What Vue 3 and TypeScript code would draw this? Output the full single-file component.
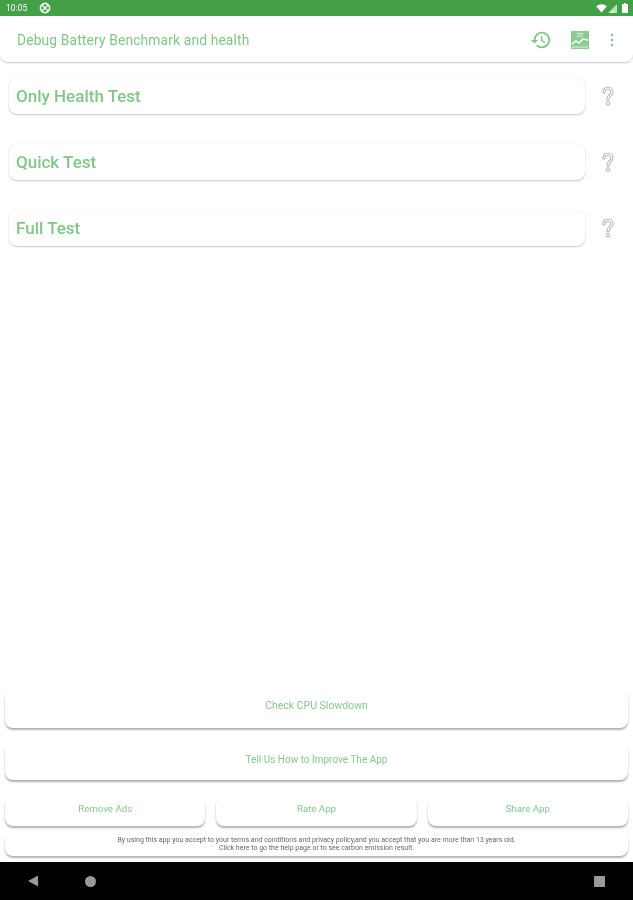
<script setup lang="ts">
const tests: string[] = ['Only Health Test', 'Quick Test', 'Full Test']
const smallButtons: string[] = ['Remove Ads', 'Rate App', 'Share App']
</script>

<template>
  <div class="screen">
    <header class="status">
      <div class="status-left">
        <span class="time">10:05</span>
        <svg class="status-badge" viewBox="0 0 12 12" width="12" height="12">
          <circle cx="6" cy="6" r="4.6" fill="none" stroke="#fff" stroke-width="1.6" />
          <path d="M3 3l6 6M9 3L3 9" stroke="#fff" stroke-width="1.2" />
        </svg>
      </div>
      <div class="status-right">
        <svg viewBox="0 0 12 10" width="11" height="9"><path d="M0 2.5Q6-2 12 2.5L6 9.5Z" fill="#fff" /></svg>
        <svg viewBox="0 0 10 10" width="9" height="9"><path d="M0 10L10 0V10Z" fill="#fff" opacity=".65" /><path d="M3 10L6 7V10Z" fill="#fff" /></svg>
        <svg class="battery" viewBox="0 0 6 10" width="6" height="10"><path d="M2 0H4V1H6V10H0V1H2Z" fill="#fff" /></svg>
      </div>
    </header>

    <section class="toolbar">
      <h1 class="title">Debug Battery Benchmark and health</h1>
      <div class="actions">
        <svg viewBox="0 0 24 24" width="22" height="22" class="history">
          <path d="M13 3a9 9 0 0 0-9 9H1l3.9 3.9L9 12H6a7 7 0 1 1 2.05 4.95l-1.42 1.42A9 9 0 1 0 13 3zm-1 5v5l4.28 2.54.72-1.21-3.5-2.08V8z" fill="#7fc685" />
        </svg>
        <svg viewBox="0 0 18 18" width="18" height="18" class="chart">
          <rect width="18" height="18" fill="#8ccb91" />
          <path d="M1 13l4-3 3 2 4-4 5 1" fill="none" stroke="#fff" stroke-width="1.5" />
          <path d="M6 2.500h6M6 5h6M1 16h16" stroke="#fff" stroke-width="1" opacity=".75" />
        </svg>
        <svg viewBox="0 0 4 14" width="4" height="14" class="more">
          <circle cx="2" cy="2" r="1.2" fill="#7fc685" />
          <circle cx="2" cy="7" r="1.2" fill="#7fc685" />
          <circle cx="2" cy="12" r="1.2" fill="#7fc685" />
        </svg>
      </div>
    </section>

    <main class="tests">
      <div v-for="test in tests" :key="test" class="test-row">
        <div class="test-card">{{ test }}</div>
        <svg class="help" viewBox="0 0 14 20" width="14" height="20">
          <path d="M3 6c0-5 8-5 8 0 0 3-4 3.500-4 7" fill="none" stroke="#aaa" stroke-width="3.200" stroke-linecap="round" />
          <path d="M3 6c0-5 8-5 8 0 0 3-4 3.500-4 7" fill="none" stroke="#fff" stroke-width="1.300" stroke-linecap="round" />
          <circle cx="7" cy="17.500" r="1.800" fill="#fff" stroke="#aaa" stroke-width="1" />
        </svg>
      </div>
    </main>

    <section class="bottom">
      <div class="btn wide first">Check CPU Slowdown</div>
      <div class="btn wide second">Tell Us How to Improve The App</div>
      <div class="small-row">
        <div v-for="label in smallButtons" :key="label" class="btn small">{{ label }}</div>
      </div>
      <div class="btn legal">
        <span>By using this app you accept to your terms and conditions and privacy policy,and you accept that you are more than 13 years old.</span>
        <span>Click here to go the help page or to see carbon emission result.</span>
      </div>
    </section>

    <nav class="navbar">
      <svg viewBox="0 0 12 12" width="11" height="12" class="nav-back"><path d="M11 0V12L0 6Z" fill="#9a9a9a" /></svg>
      <span class="nav-home"></span>
      <span class="nav-recent"></span>
    </nav>
  </div>
</template>

<style scoped>
.screen {
  width: 633px;
  height: 900px;
  display: flex;
  flex-direction: column;
  background: #fff;
  font-family: Roboto, "Liberation Sans", sans-serif;
  overflow: hidden;
  filter: blur(0.4px);
}
.status {
  height: 16px;
  flex: none;
  background: #43a047;
  display: flex;
  align-items: center;
  justify-content: space-between;
  padding: 0 5px 0 6px;
  color: #fff;
}
.status-left, .status-right { display: flex; align-items: center; }
.status-right { gap: 1px; }
.battery { margin-left: 4px; }
.time { font-size: 8.5px; width: 32px; }
.status-badge { margin-left: 1px; }
.toolbar {
  height: 45px;
  flex: none;
  margin-top: 1px;
  display: flex;
  align-items: center;
  justify-content: space-between;
  padding: 0 22px 0 17px;
  border-radius: 0 0 8px 8px;
  box-shadow: 0 1px 2px rgba(0, 0, 0, .22);
}
.title {
  margin: 0;
  font-size: 13.8px;
  font-weight: 400;
  color: #7fc685;
  letter-spacing: .15px;
}
.actions { display: flex; align-items: center; }
.chart { margin-left: 19px; }
.more { margin-left: 21px; margin-right: -3px; }
.tests {
  flex: 1;
  padding: 16px 8px 0 9px;
  display: flex;
  flex-direction: column;
  gap: 30px;
}
.test-row { display: flex; align-items: center; }
.test-card {
  width: 576px;
  height: 36px;
  box-sizing: border-box;
  padding-left: 7px;
  display: flex;
  align-items: center;
  border-radius: 8px;
  font-size: 17px;
  font-weight: 500;
  color: #82c788;
  box-shadow: 0 1px 2px rgba(0, 0, 0, .2), 0 0 1px rgba(0, 0, 0, .12);
}
.help { margin-left: 16px; }
.bottom {
  flex: none;
  padding: 0 5px 6px;
  display: flex;
  flex-direction: column;
}
.btn {
  display: flex;
  align-items: center;
  justify-content: center;
  border-radius: 8px;
  font-size: 9.7px;
  color: #86ca8c;
  box-shadow: 0 2px 2px rgba(0, 0, 0, .3), 0 0 1px rgba(0, 0, 0, .06);
}
.wide { box-sizing: border-box; }
.wide.first {
  height: 38px;
  padding-bottom: 7px;
  font-size: 10.5px;
}
.wide.second {
  height: 37px;
  margin-top: 15px;
  padding-bottom: 4px;
  font-size: 10px;
}
.small-row {
  margin-top: 17px;
  display: flex;
  gap: 11px;
}
.small {
  flex: 1;
  height: 29px;
  box-sizing: border-box;
  padding-bottom: 6px;
}
.legal {
  margin-top: 6px;
  height: 24px;
  box-sizing: border-box;
  padding-bottom: 1px;
  flex-direction: column;
  font-size: 7px;
  line-height: 8px;
  color: #666;
  text-align: center;
}
.navbar {
  height: 38px;
  flex: none;
  background: #000;
  display: flex;
  align-items: center;
}
.nav-back { margin-left: 28px; }
.nav-home {
  margin-left: 46px;
  width: 11px;
  height: 11px;
  border-radius: 50%;
  background: #9a9a9a;
}
.nav-recent {
  margin-left: auto;
  margin-right: 28px;
  width: 11px;
  height: 11px;
  border-radius: 1px;
  background: #9a9a9a;
}
</style>
